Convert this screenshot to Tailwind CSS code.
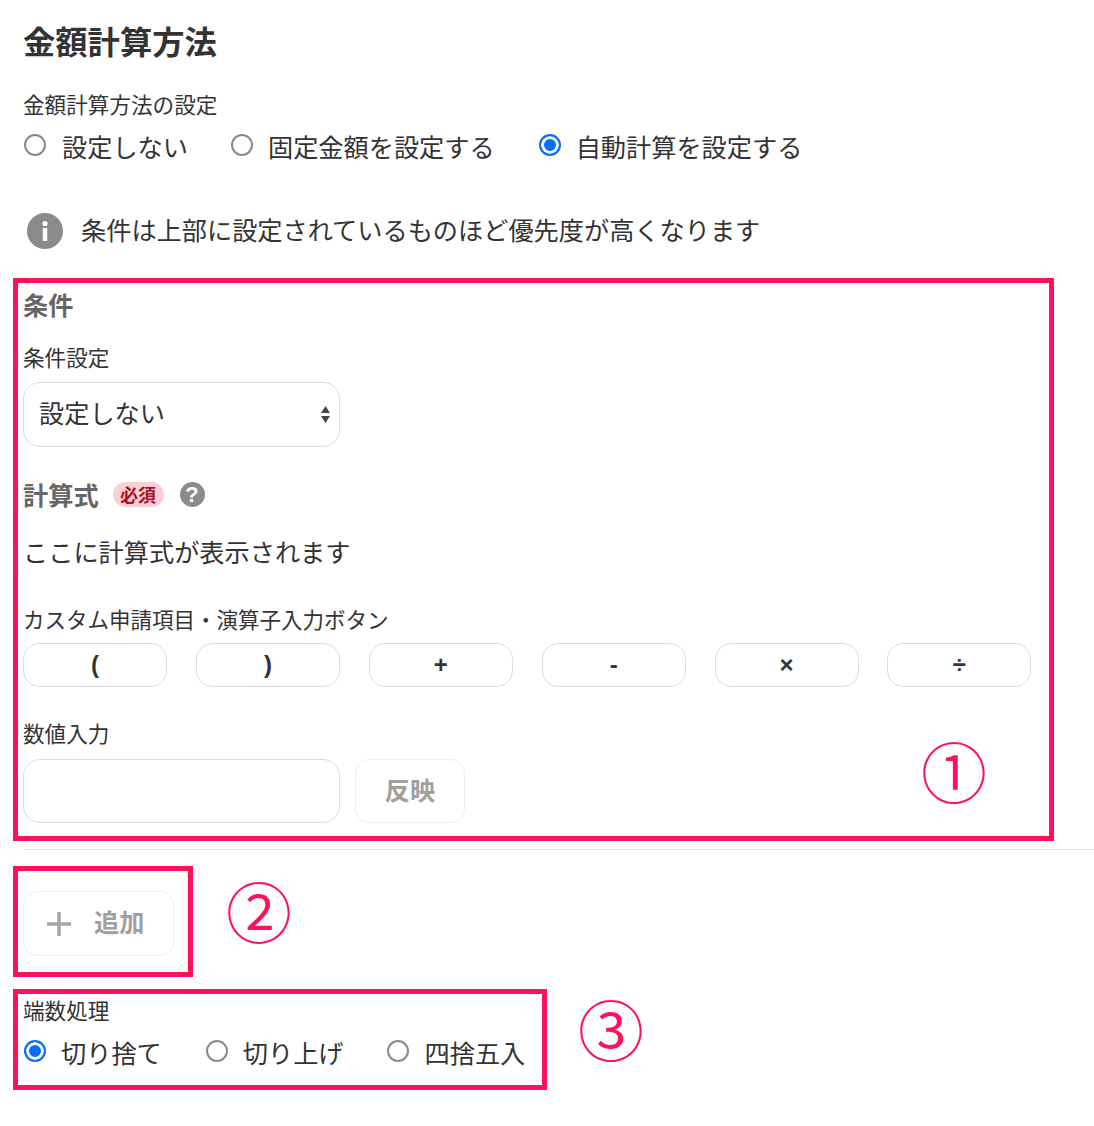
<!DOCTYPE html>
<html lang="ja">
<head>
<meta charset="utf-8">
<script src="https://cdn.jsdelivr.net/npm/@tailwindcss/browser@4"></script>
</head>
<body class="bg-white">
<main class="relative h-[1126px] w-[1094px] overflow-hidden pl-[23px] pt-[18px] text-[#333] font-['Noto_Sans_CJK_JP','Noto_Sans',sans-serif]">
  <h1 class="h-[44px] text-[32.3px] leading-[44px] font-bold">金額計算方法</h1>
  <p class="mt-[29px] h-[26px] text-[21.6px] leading-[26px]">金額計算方法の設定</p>
  <div class="mt-[14px] flex h-[30px] items-center text-[25.2px] leading-[30px]">
    <input type="radio" name="m" class="ml-px mb-[2px] h-[22px] w-[22px] appearance-none rounded-full border-2 border-[#8a8a8a] bg-white checked:border-[#0a6cff] checked:bg-[#0a6cff] checked:shadow-[inset_0_0_0_3px_#fff]">
    <span class="ml-[16px]">設定しない</span>
    <input type="radio" name="m" class="ml-[43px] mb-[2px] h-[22px] w-[22px] appearance-none rounded-full border-2 border-[#8a8a8a] bg-white checked:border-[#0a6cff] checked:bg-[#0a6cff] checked:shadow-[inset_0_0_0_3px_#fff]">
    <span class="ml-[15px]">固定金額を設定する</span>
    <input type="radio" name="m" checked class="ml-[44px] mb-[2px] h-[22px] w-[22px] appearance-none rounded-full border-2 border-[#8a8a8a] bg-white checked:border-[#0a6cff] checked:bg-[#0a6cff] checked:shadow-[inset_0_0_0_3px_#fff]">
    <span class="ml-[15px]">自動計算を設定する</span>
  </div>
  <div class="mt-[52px] flex h-[36px] items-center text-[25.2px]">
    <svg class="ml-[4px] h-[36px] w-[36px]" viewBox="0 0 36 36"><circle cx="18" cy="18" r="18" fill="#8c8a8b"/><circle cx="18" cy="10.5" r="2.600" fill="#fff"/><rect x="15.800" y="15" width="4.400" height="13" fill="#fff"/></svg>
    <span class="ml-[18px] mb-[2px]">条件は上部に設定されているものほど優先度が高くなります</span>
  </div>
  <h2 class="mt-[40px] h-[30px] text-[25.2px] leading-[30px] font-bold text-[#666]">条件</h2>
  <p class="mt-[25px] h-[26px] text-[21.6px] leading-[26px]">条件設定</p>
  <div class="relative mt-[12px] h-[65px] w-[317px]">
    <select class="h-full w-full appearance-none rounded-[17px] border border-[#ddd] bg-white pb-[3px] pl-[15px] text-[25.2px]"><option>設定しない</option></select>
    <svg class="pointer-events-none absolute right-[10px] top-[24px] h-[17px] w-[9px]" viewBox="0 0 9 17"><path d="M4.500 0 9 7H0zM0 10h9l-4.500 7z" fill="#444"/></svg>
  </div>
  <div class="mt-[32px] flex h-[30px] items-center">
    <h2 class="text-[25.2px] leading-[30px] font-bold text-[#666]">計算式</h2>
    <span class="ml-[14px] mt-[1px] flex h-[25px] w-[51px] items-center justify-center rounded-full bg-[#f9d0d6] text-[18px] font-bold text-[#a8102c]">必須</span>
    <span class="ml-[16px] mt-[1px] flex h-[25px] w-[25px] items-center justify-center rounded-full bg-[#8c8a8b] font-['Liberation_Sans'] text-[22px] font-bold text-white">?</span>
  </div>
  <p class="mt-[27px] h-[30px] text-[25.2px] leading-[30px]">ここに計算式が表示されます</p>
  <p class="mt-[40px] h-[26px] text-[21.5px] leading-[26px]">カスタム申請項目・演算子入力ボタン</p>
  <div class="mt-[11px] grid h-[44px] w-[1008.4px] grid-cols-[repeat(6,144px)] gap-[28.88px] font-['Liberation_Sans'] text-[24px] font-bold">
    <button class="rounded-[16px] border border-[#ddd] bg-white">(</button>
    <button class="rounded-[16px] border border-[#ddd] bg-white">)</button>
    <button class="rounded-[16px] border border-[#ddd] bg-white">+</button>
    <button class="rounded-[16px] border border-[#ddd] bg-white">-</button>
    <button class="rounded-[16px] border border-[#ddd] bg-white">×</button>
    <button class="rounded-[16px] border border-[#ddd] bg-white">÷</button>
  </div>
  <p class="mt-[33px] h-[26px] text-[21.6px] leading-[26px]">数値入力</p>
  <div class="mt-[13px] flex h-[64px] gap-[15px]">
    <input type="text" class="h-full w-[317px] rounded-[17px] border border-[#ddd] bg-white">
    <button class="h-full w-[110px] rounded-[14px] border border-[#eee] bg-white pb-[2px] text-[25.2px] font-bold text-[#a0a0a0]">反映</button>
  </div>
  <hr class="mt-[26px] border-t border-[#e5e5e5]">
  <button class="mt-[41px] flex h-[65px] w-[151px] items-center rounded-[14px] border border-[#eee] bg-white pl-[23px] text-[25.2px] font-bold text-[#a0a0a0]">
    <svg class="h-[24px] w-[24px]" viewBox="0 0 24 24"><path d="M12 0v24M0 12h24" stroke="#a6a6a6" stroke-width="3.500" fill="none"/></svg>
    <span class="ml-[23px] mb-[3px]">追加</span>
  </button>
  <p class="mt-[41px] h-[26px] text-[21.6px] leading-[26px]">端数処理</p>
  <div class="mt-[14px] flex h-[30px] items-center text-[25.2px] leading-[30px]">
    <input type="radio" name="r" checked class="ml-px mb-[2px] h-[22px] w-[22px] appearance-none rounded-full border-2 border-[#8a8a8a] bg-white checked:border-[#0a6cff] checked:bg-[#0a6cff] checked:shadow-[inset_0_0_0_3px_#fff]">
    <span class="ml-[15px]">切り捨て</span>
    <input type="radio" name="r" class="ml-[44px] mb-[2px] h-[22px] w-[22px] appearance-none rounded-full border-2 border-[#8a8a8a] bg-white checked:border-[#0a6cff] checked:bg-[#0a6cff] checked:shadow-[inset_0_0_0_3px_#fff]">
    <span class="ml-[15px]">切り上げ</span>
    <input type="radio" name="r" class="ml-[43px] mb-[2px] h-[22px] w-[22px] appearance-none rounded-full border-2 border-[#8a8a8a] bg-white checked:border-[#0a6cff] checked:bg-[#0a6cff] checked:shadow-[inset_0_0_0_3px_#fff]">
    <span class="ml-[16px]">四捨五入</span>
  </div>

  <div class="pointer-events-none absolute left-[13px] top-[278px] h-[563px] w-[1041px] border-[5px] border-[#ff1058]"></div>
  <div class="pointer-events-none absolute left-[13px] top-[866px] h-[111px] w-[180px] border-[5px] border-[#ff1058]"></div>
  <div class="pointer-events-none absolute left-[13px] top-[989px] h-[101px] w-[534px] border-[5px] border-[#ff1058]"></div>
  <span class="absolute left-[921px] top-[729px] text-[66px] leading-[80px] font-[350] text-[#ff1058]">①</span>
  <span class="absolute left-[226px] top-[869px] text-[66px] leading-[80px] font-[350] text-[#ff1058]">②</span>
  <span class="absolute left-[578px] top-[987px] text-[66px] leading-[80px] font-[350] text-[#ff1058]">③</span>
</main>
</body>
</html>
